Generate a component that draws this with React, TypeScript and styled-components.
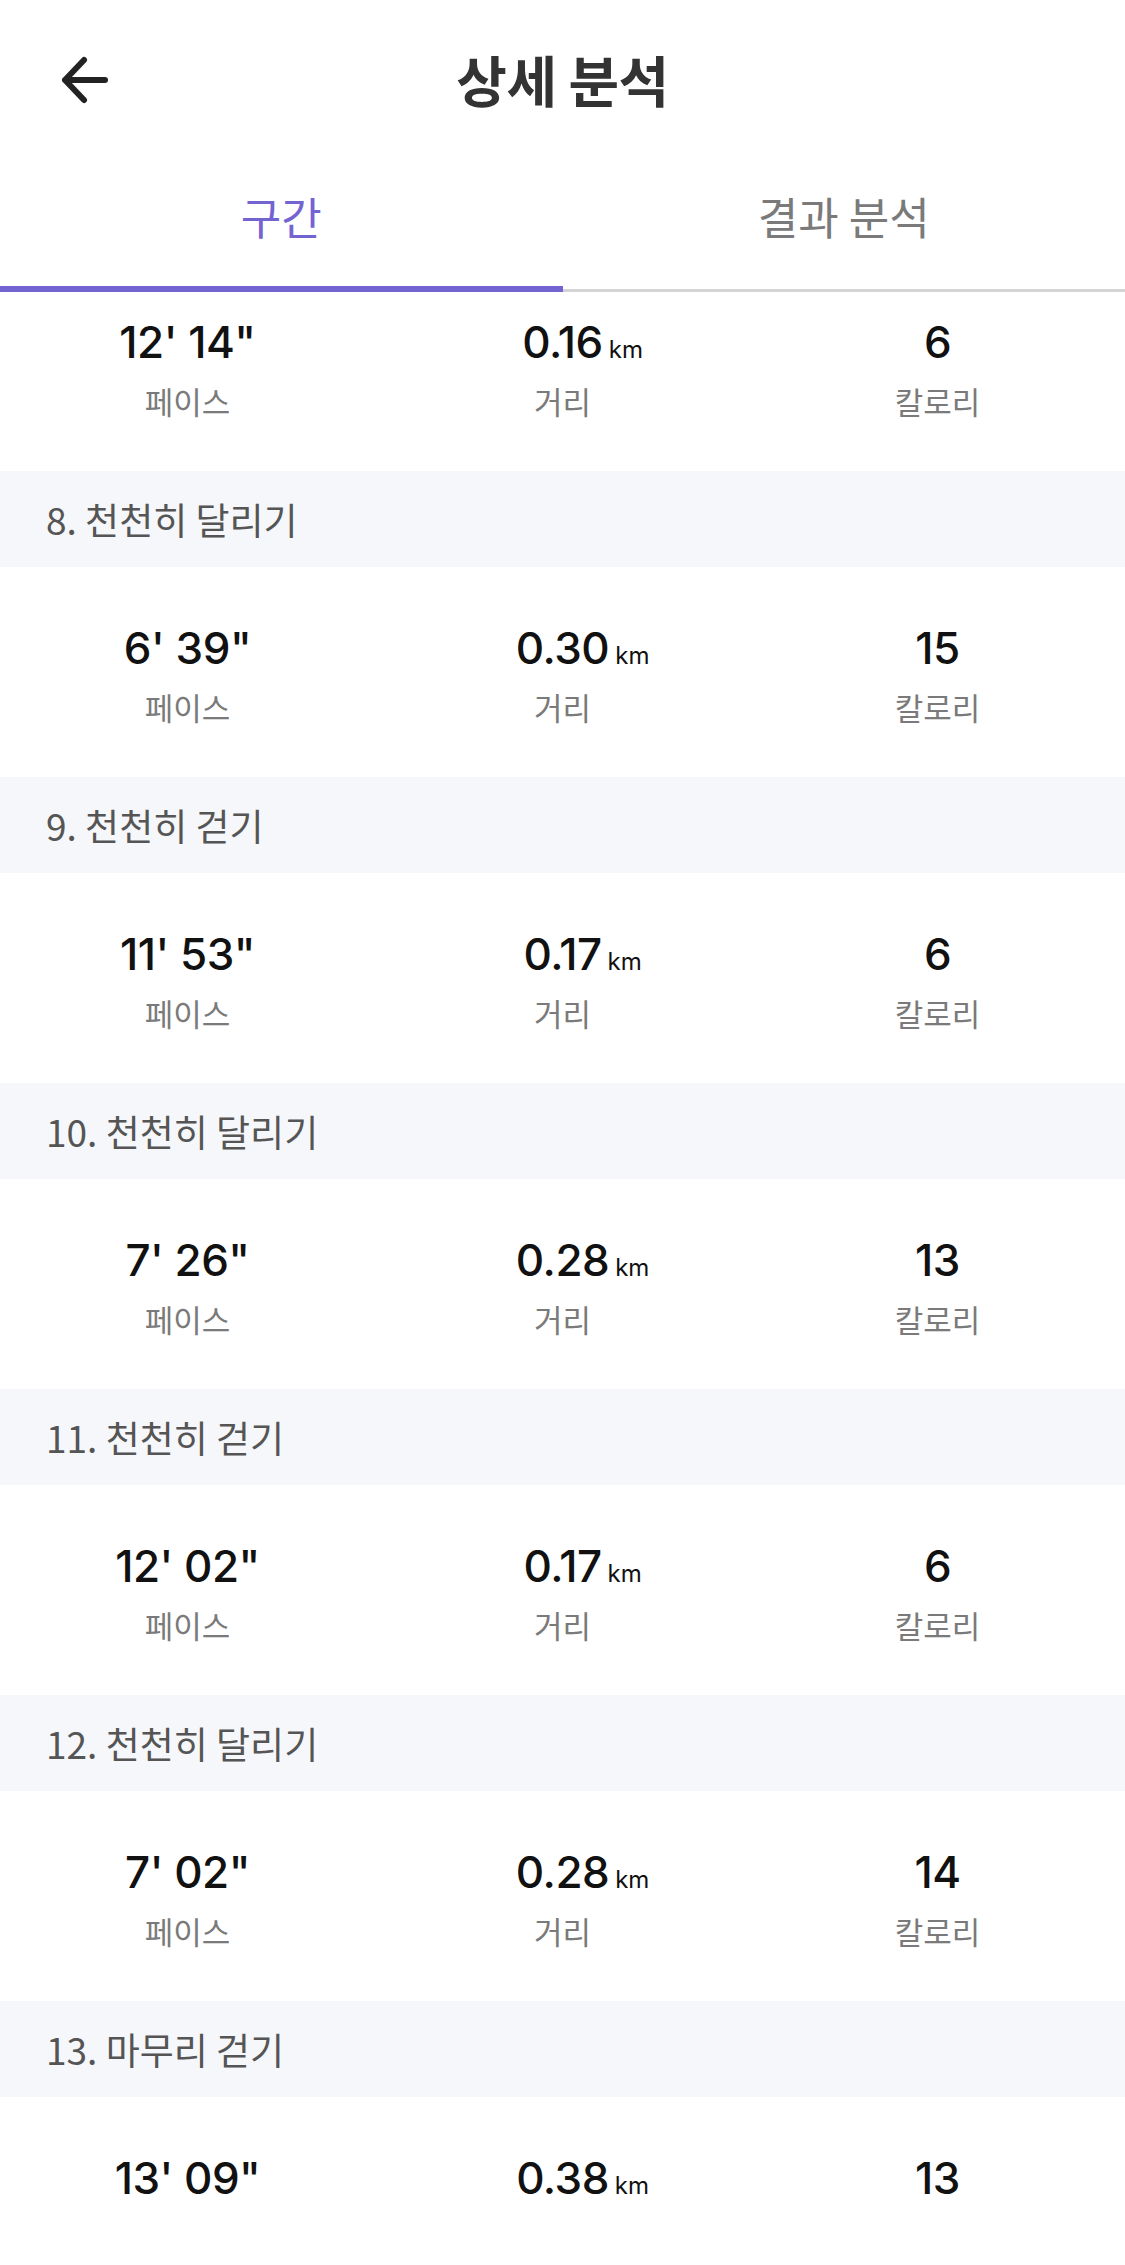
import styled, { createGlobalStyle } from "styled-components";

const GlobalStyle = createGlobalStyle`
  html, body {
    margin: 0;
    padding: 0;
    background: #ffffff;
  }
  body {
    font-family: "Inter", "Noto Sans CJK KR", sans-serif;
    -webkit-font-smoothing: antialiased;
  }
`;

const KR = `"Noto Sans CJK KR", "Noto Sans", sans-serif`;
const NUM = `"Inter", "Noto Sans CJK KR", sans-serif`;

type Segment = {
  title: string;
  pace: string;
  distance: string;
  calories: number;
};

// 7번 구간은 스크롤되어 위쪽이 잘려 있음
const FIRST = { pace: `12' 14"`, distance: "0.16", calories: 6 };

const SEGMENTS: Segment[] = [
  { title: "8. 천천히 달리기", pace: `6' 39"`, distance: "0.30", calories: 15 },
  { title: "9. 천천히 걷기", pace: `11' 53"`, distance: "0.17", calories: 6 },
  { title: "10. 천천히 달리기", pace: `7' 26"`, distance: "0.28", calories: 13 },
  { title: "11. 천천히 걷기", pace: `12' 02"`, distance: "0.17", calories: 6 },
  { title: "12. 천천히 달리기", pace: `7' 02"`, distance: "0.28", calories: 14 },
  { title: "13. 마무리 걷기", pace: `13' 09"`, distance: "0.38", calories: 13 },
];

const Page = styled.div`
  width: 1125px;
  height: 2265px;
  overflow: hidden;
  background: #ffffff;
  display: flex;
  flex-direction: column;
`;

const NavBar = styled.header`
  height: 160px;
  flex-shrink: 0;
  display: grid;
  grid-template-columns: 1fr auto 1fr;
  align-items: center;
`;

const BackButton = styled.button`
  justify-self: start;
  margin-left: 56px;
  width: 58px;
  height: 58px;
  padding: 0;
  border: none;
  background: none;
  display: flex;
  align-items: center;
  justify-content: center;
  color: #222222;
`;

const Title = styled.h1`
  margin: 0 0 4px;
  font-family: ${KR};
  font-size: 55px;
  font-weight: 700;
  line-height: 1;
  color: #333333;
  letter-spacing: -0.5px;
`;

const TabBar = styled.nav`
  display: flex;
  flex-shrink: 0;
  height: 132px;
`;

const Tab = styled.div<{ $active?: boolean }>`
  flex: 1;
  box-sizing: border-box;
  display: flex;
  align-items: center;
  justify-content: center;
  padding-bottom: ${(p) => (p.$active ? 14 : 17)}px;
  border-bottom: ${(p) => (p.$active ? "6px solid #7364d2" : "3px solid #d4d4d4")};
  font-family: ${KR};
  font-size: 44px;
  font-weight: 400;
  color: ${(p) => (p.$active ? "#7364d2" : "#7a7a7a")};
`;

const Scroller = styled.div`
  flex: 1;
  overflow: hidden;
`;

const List = styled.div`
  margin-top: -31px;
`;

const BottomInset = styled.div`
  height: 55px;
  flex-shrink: 0;
  background: #ffffff;
`;

const SectionHeader = styled.div`
  height: 96px;
  box-sizing: border-box;
  display: flex;
  align-items: center;
  padding-left: 46px;
  background: #f6f7fa;
  font-family: ${KR};
  font-size: 37px;
  color: #555555;
`;

const StatRow = styled.div`
  height: 210px;
  display: grid;
  grid-template-columns: repeat(3, 1fr);
`;

const Stat = styled.div`
  display: flex;
  flex-direction: column;
  align-items: center;
  padding-top: 59px;
`;

const Value = styled.div`
  width: 100%;
  height: 44px;
  display: grid;
  grid-template-columns: 1fr auto 1fr;
  align-items: baseline;
  font-family: ${NUM};
  font-size: 44px;
  font-weight: 500;
  line-height: 44px;
  color: #111111;
  letter-spacing: -0.5px;
`;

const Number = styled.span`
  grid-column: 2;
`;

const Unit = styled.span`
  grid-column: 3;
  justify-self: start;
  padding-left: 6px;
  font-size: 24px;
  font-weight: 400;
  line-height: 24px;
  letter-spacing: 0;
`;

const Label = styled.div`
  margin-top: 21px;
  font-family: ${KR};
  font-size: 31px;
  line-height: 31px;
  color: #7a7a7a;
`;

function BackArrow() {
  return (
    <svg width="50" height="50" viewBox="0 0 50 50" fill="none">
      <path
        d="M45 25H5M24 5L5 25L24 45"
        stroke="currentColor"
        strokeWidth="6"
        strokeLinecap="round"
        strokeLinejoin="round"
      />
    </svg>
  );
}

function Stats({ pace, distance, calories }: { pace: string; distance: string; calories: number }) {
  return (
    <StatRow>
      <Stat>
        <Value>
          <Number>{pace}</Number>
        </Value>
        <Label>페이스</Label>
      </Stat>
      <Stat>
        <Value>
          <Number>{distance}</Number>
          <Unit>km</Unit>
        </Value>
        <Label>거리</Label>
      </Stat>
      <Stat>
        <Value>
          <Number>{calories}</Number>
        </Value>
        <Label>칼로리</Label>
      </Stat>
    </StatRow>
  );
}

export default function App() {
  return (
    <Page>
      <GlobalStyle />
      <NavBar>
        <BackButton aria-label="뒤로">
          <BackArrow />
        </BackButton>
        <Title>상세 분석</Title>
        <span />
      </NavBar>
      <TabBar>
        <Tab $active>구간</Tab>
        <Tab>결과 분석</Tab>
      </TabBar>
      <Scroller>
        <List>
          <Stats {...FIRST} />
          {SEGMENTS.map((s) => (
            <div key={s.title}>
              <SectionHeader>{s.title}</SectionHeader>
              <Stats pace={s.pace} distance={s.distance} calories={s.calories} />
            </div>
          ))}
        </List>
      </Scroller>
      <BottomInset />
    </Page>
  );
}
